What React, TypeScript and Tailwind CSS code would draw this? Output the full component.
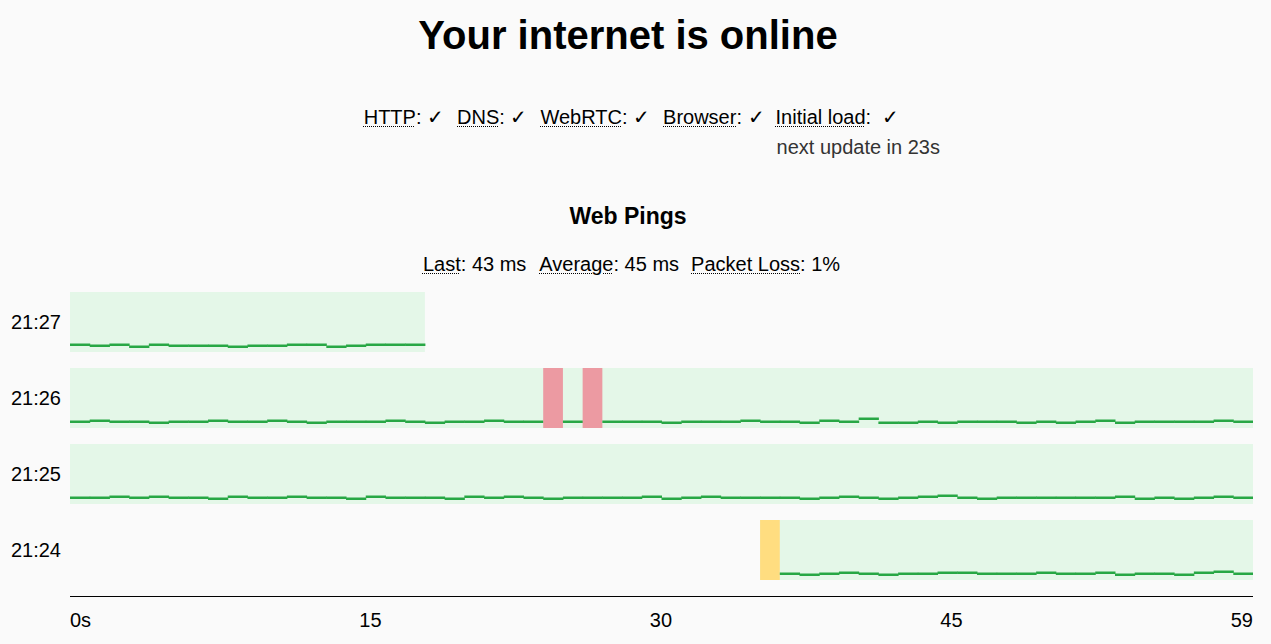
import React from "react";

const W = 1183;
const H = 60;
const SEC = W / 60;

// per-second line offsets: "a" = 1px lower, digits = px higher, "x" = lost, "y" = slow, "." = no data
function build(base: string, marks: Record<number, string> = {}, from = 0, len = 60) {
  const cells = (base + "0".repeat(60)).slice(0, len).split("");
  for (let i = 0; i < from; i++) cells[i] = ".";
  Object.entries(marks).forEach(([k, v]) => (cells[Number(k)] = v));
  return cells;
}

const rows = [
  { label: "21:27", cells: build("101a1000a0011a0111", {}, 0, 18) },
  {
    label: "21:26",
    cells: build(
      "0100a0010010a00010a00100001000a000100a1a1000a000a0a01a0000101a",
      { 24: "x", 26: "x", 39: "0", 40: "3", 41: "a", 42: "a" },
    ),
  },
  {
    label: "21:25",
    cells: build("0010100a100100a1000a1010a00001a010000a010a0120a0000001a0a0100"),
  },
  {
    label: "21:24",
    cells: build(
      "...................................y0a010a00110001001a00a120",
      { 35: "y" },
      35,
    ),
  },
];

function offset(c: string) {
  if (c === "a") return -1;
  return Number(c) || 0;
}

function Abbr({ children }: { children: string }) {
  return (
    <abbr
      title={children}
      className="underline decoration-dotted decoration-1 underline-offset-2"
    >
      {children}
    </abbr>
  );
}

function Row({ label, cells }: { label: string; cells: string[] }) {
  const first = cells.findIndex((c) => c !== ".");
  return (
    <div className="flex items-center h-[60px]">
      <div className="w-[70px] pr-[9px] text-right text-[20px] leading-[24px]">
        {label}
      </div>
      <svg width={W} height={H} className="block">
        <rect
          x={first * SEC}
          y={0}
          width={(cells.length - first) * SEC}
          height={H}
          fill="#e4f7e8"
        />
        {cells.map((c, i) => {
          if (c === ".") return null;
          if (c === "x")
            return (
              <rect key={i} x={i * SEC} y={0} width={SEC} height={H} fill="#ec9aa2" />
            );
          if (c === "y")
            return (
              <rect key={i} x={i * SEC} y={0} width={SEC} height={H} fill="#ffdd80" />
            );
          return (
            <rect
              key={i}
              x={i * SEC}
              y={52.5 - offset(c)}
              width={SEC + 0.5}
              height={2.5}
              fill="#28a745"
            />
          );
        })}
      </svg>
    </div>
  );
}

export default function App() {
  return (
    <div className="min-h-[644px] bg-[#fafafa] text-black font-['Liberation_Sans',Arial,sans-serif] pt-[11px]">
      <div className="w-[1256px]">
        <h1 className="text-center text-[40px] leading-[48px] font-bold">
          Your internet is online
        </h1>

        <div className="mt-[43px] flex justify-center text-[20px] leading-[30px]">
          <div className="mr-[13px]">
            <Abbr>HTTP</Abbr>: ✓
          </div>
          <div className="mr-[13px]">
            <Abbr>DNS</Abbr>: ✓
          </div>
          <div className="mr-[13px]">
            <Abbr>WebRTC</Abbr>: ✓
          </div>
          <div className="mr-[11px]">
            <Abbr>Browser</Abbr>: ✓
          </div>
          <div className="-mr-[7px] flex flex-col items-start">
            <div>
              <Abbr>Initial load</Abbr>:{"\u00a0 "}✓
            </div>
            <div className="w-0 whitespace-nowrap pl-[1px] text-[#333]">
              next update in 23s
            </div>
          </div>
        </div>

        <h2 className="mt-[39px] text-center text-[23px] leading-[30px] font-bold">
          Web Pings
        </h2>

        <div className="mt-[18px] flex justify-center text-[20px] leading-[30px]">
          <div className="mr-[13px]">
            <Abbr>Last</Abbr>: 43 ms
          </div>
          <div className="mr-[12px]">
            <Abbr>Average</Abbr>: 45 ms
          </div>
          <div className="-mr-[7px]">
            <Abbr>Packet Loss</Abbr>: 1%
          </div>
        </div>

        <div className="mt-[13px] flex flex-col gap-[16px]">
          {rows.map((r) => (
            <Row key={r.label} label={r.label} cells={r.cells} />
          ))}
        </div>

        <div className="ml-[70px] w-[1183px] mt-[16px] border-t border-black" />
        <div className="ml-[70px] w-[1183px] mt-[11px] flex justify-between text-[20px] leading-[24px]">
          <span>0s</span>
          <span>15</span>
          <span>30</span>
          <span>45</span>
          <span>59</span>
        </div>
      </div>
    </div>
  );
}
